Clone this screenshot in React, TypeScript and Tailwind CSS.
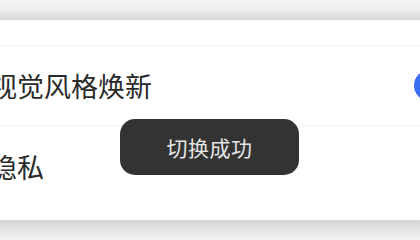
import React from "react";

export default function App() {
  const font = { fontFamily: '"Noto Sans CJK SC", "Noto Sans", sans-serif' };
  return (
    <div className="relative w-[420px] h-[240px] overflow-hidden bg-white" style={font}>
      <div className="flex flex-col h-full">
        <div className="h-[20px] bg-gradient-to-b from-[#f6f6f6] via-[#ececec] to-[#d6d6d6]" />
        <div className="flex flex-col bg-white h-[200px]">
          <div className="h-[26px] border-b border-[#f1f1f1]" />
          <div className="h-[80px] flex items-center justify-between border-b border-[#f1f1f1]">
            <span className="ml-[-10px] text-[27px] leading-none text-[#2a2a2a]">视觉风格焕新</span>
            <div className="w-[52px] h-[31px] rounded-full bg-[#3a6ff3] mr-[-46px]" />
          </div>
          <div className="h-[80px] flex items-center">
            <span className="ml-[-10px] text-[27px] leading-none text-[#2a2a2a]">隐私</span>
          </div>
        </div>
        <div className="flex-1 bg-gradient-to-b from-[#d4d4d4] via-[#e6e6e6] to-[#f2f2f2]" />
      </div>
      <div className="absolute left-[120px] top-[119px] w-[179px] h-[56px] rounded-[15px] bg-[#333333] flex items-center justify-center">
        <span className="text-[21px] leading-none text-[#e6e6e6] tracking-[0.5px]">切换成功</span>
      </div>
    </div>
  );
}
